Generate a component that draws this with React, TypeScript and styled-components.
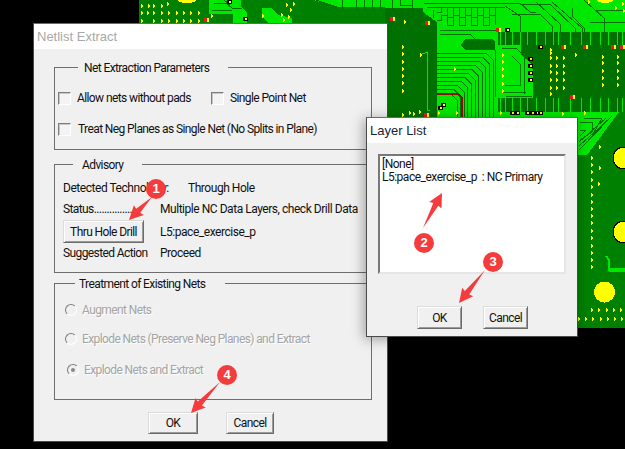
import React from "react";
import styled, { createGlobalStyle } from "styled-components";

const Global = createGlobalStyle`
  html, body {
    margin: 0;
    padding: 0;
    background: #000;
  }
  * {
    box-sizing: border-box;
  }
`;

const Desktop = styled.div`
  position: relative;
  width: 625px;
  height: 449px;
  overflow: hidden;
  background: #000;
  font-family: Roboto, "Liberation Sans", Arial, sans-serif;
  font-size: 12px;
  letter-spacing: -0.6px;
  color: #111;
`;

const Board = styled.svg`
  position: absolute;
  left: 139px;
  top: 0;
`;

const Overlay = styled.svg`
  position: absolute;
  left: 0;
  top: 0;
  pointer-events: none;
`;

const Window = styled.div<{ $x: number; $y: number; $w: number; $h: number; $shadow?: boolean }>`
  position: absolute;
  left: ${p => p.$x}px;
  top: ${p => p.$y}px;
  width: ${p => p.$w}px;
  height: ${p => p.$h}px;
  background: #f0f0f0;
  border: 1px solid #4a4a4a;
  border-top-color: #6a6a6a;
  box-shadow: ${p => (p.$shadow ? "-2px 2px 12px rgba(0, 0, 0, 0.35)" : "none")};
`;

const TitleBar = styled.div<{ $active?: boolean }>`
  height: 25px;
  background: #fff;
  padding-left: 3px;
  line-height: 25px;
  font-family: "Liberation Sans", Arial, sans-serif;
  font-size: 13px;
  letter-spacing: 0;
  color: ${p => (p.$active ? "#14253a" : "#a8a8a8")};
`;

const MainBody = styled.div`
  padding: 18px 0 0 20px;
`;

const Group = styled.div<{ $h: number; $top?: number }>`
  position: relative;
  width: 318px;
  height: ${p => p.$h}px;
  margin-top: ${p => p.$top || 0}px;
  border: 1px solid #6e6e6e;
`;

const Legend = styled.span<{ $x: number; $w: number; $pad: number }>`
  position: absolute;
  left: ${p => p.$x}px;
  top: -7px;
  width: ${p => p.$w}px;
  height: 14px;
  padding-left: ${p => p.$pad}px;
  line-height: 14px;
  background: #f0f0f0;
  white-space: nowrap;
`;

const GroupContent = styled.div<{ $top: number; $left: number }>`
  display: flex;
  flex-direction: column;
  padding: ${p => p.$top}px 0 0 ${p => p.$left}px;
`;

const Row = styled.div<{ $top?: number; $h?: number }>`
  display: flex;
  align-items: center;
  height: ${p => p.$h || 14}px;
  margin-top: ${p => p.$top || 0}px;
  white-space: nowrap;
`;

const Check = styled.label<{ $w?: number; $gap?: number }>`
  display: flex;
  align-items: center;
  gap: ${p => p.$gap || 6}px;
  width: ${p => (p.$w ? `${p.$w}px` : "auto")};
`;

const CheckBox = styled.span`
  display: block;
  width: 13px;
  height: 13px;
  background: #f4f4f4;
  border: 1px solid;
  border-color: #7c7c7c #fff #fff #7c7c7c;
  box-shadow: inset 1px 1px 0 #c8c8c8;
`;

const RowLabel = styled.span<{ $w: number }>`
  display: block;
  width: ${p => p.$w}px;
  flex: none;
`;

const RowValue = styled.span`
  letter-spacing: -0.46px;
`;

const Radio = styled.label<{ $indent?: number }>`
  display: flex;
  align-items: center;
  gap: 5px;
  margin-left: ${p => p.$indent || 0}px;
  color: #a4a4a4;
  text-shadow: 1px 1px 0 #fff;
`;

const RadioDot = styled.span<{ $on?: boolean }>`
  display: flex;
  align-items: center;
  justify-content: center;
  width: 12px;
  height: 12px;
  border-radius: 50%;
  border: 1px solid;
  border-color: #7c7c7c #fff #fff #7c7c7c;
  &::after {
    content: "";
    width: 4px;
    height: 4px;
    border-radius: 50%;
    background: ${p => (p.$on ? "#8a8a8a" : "transparent")};
  }
`;

const Button = styled.button<{ $w: number; $h?: number }>`
  width: ${p => p.$w}px;
  height: ${p => p.$h || 22}px;
  padding: 0;
  background: #f0f0f0;
  border: 1px solid;
  border-color: #dcdcdc #6c6c6c #6c6c6c #dcdcdc;
  box-shadow: inset 1px 1px 0 #fff, inset -1px -1px 0 #9a9a9a;
  font: inherit;
  letter-spacing: inherit;
  color: #111;
`;

const Footer = styled.div<{ $top: number; $left: number; $gap: number }>`
  display: flex;
  gap: ${p => p.$gap}px;
  margin: ${p => p.$top}px 0 0 ${p => p.$left}px;
`;

const ListBody = styled.div`
  padding: 11px 0 0 11px;
`;

const ListBox = styled.div`
  width: 188px;
  height: 120px;
  padding: 2px 0 0 2px;
  background: #fff;
  border: 2px solid;
  border-color: #787878 #e6e6e6 #e6e6e6 #787878;
  line-height: 13px;
  white-space: pre;
  letter-spacing: -0.5px;
`;

const Badge = styled.span<{ $x: number; $y: number }>`
  position: absolute;
  left: ${p => p.$x - 10}px;
  top: ${p => p.$y - 10}px;
  width: 20px;
  height: 20px;
  border-radius: 50%;
  background: #f53c3c;
  color: #fff;
  font-family: "Liberation Sans", Arial, sans-serif;
  font-size: 13px;
  font-weight: bold;
  letter-spacing: 0;
  line-height: 20px;
  text-align: center;
`;

const BASE = "#008000";
const DARK = "#007000";
const LIME = "#00e800";

// arrow from a thin tail to a wide head
const arrowPoints = (x1: number, y1: number, x2: number, y2: number) => {
  const len = Math.hypot(x2 - x1, y2 - y1);
  const ux = (x2 - x1) / len;
  const uy = (y2 - y1) / len;
  const nx = -uy;
  const ny = ux;
  const bx = x2 - ux * 13;
  const by = y2 - uy * 13;
  const pt = (x: number, y: number) => `${x.toFixed(1)},${y.toFixed(1)}`;
  return [
    pt(x1, y1),
    pt(bx + nx * 2.8, by + ny * 2.8),
    pt(bx + nx * 7 - ux, by + ny * 7 - uy),
    pt(x2, y2),
    pt(bx - nx * 7 - ux, by - ny * 7 - uy),
    pt(bx - nx * 2.8, by - ny * 2.8)
  ].join(" ");
};

const arrows = [
  [152, 197, 129, 220],
  [423, 228, 442, 193],
  [485, 270, 459, 303],
  [220, 382, 191, 413]
];

const badges = [
  { n: 1, x: 156, y: 189 },
  { n: 2, x: 424, y: 243 },
  { n: 3, x: 493, y: 262 },
  { n: 4, x: 227, y: 375 }
];

const brightZones = [
  "209,0 241,0 241,7 247,12 247,23 233,23 233,14 209,14",
  "262,8 272,8 278,15 292,18 292,23 268,23 262,16",
  "313,0 385,0 385,7 337,7",
  "385,0 625,0 625,32 498,32 498,98 533,98 533,70 530,62 521,55 521,45 498,45 498,117 437,117 437,22 423,12 423,8 385,8",
  "498,112 578,112 578,117 498,117",
  "578,112 619,112 587,155 578,155"
];

const darkZones = [
  "385,8 423,8 423,12 437,22 437,117 385,117",
  "465,39 493,39 495,42 495,50 465,50 461,45",
  "498,32 625,32 625,45 498,45",
  "533,45 625,45 625,98 533,98 533,70 530,62 521,55 521,45",
  "498,98 625,98 625,112 498,112"
];

const concentric = Array.from({ length: 11 }, (_, i) => {
  const y = 53 + i * 4;
  const x = 493 - i * 3.6;
  return `M437 ${y}H${x - 7}L${x} ${y + 7}V117`;
});

const meanders = [12, 20].map(y => {
  let d = `M437 ${y}`;
  for (let x = 441; x < 498; x += 6) {
    d += `H${x}V${y + (x % 12 === 3 ? 5 : -5)}`;
  }
  return d;
});

const traces = [
  ...concentric,
  ...meanders,
  "M412 0V8",
  "M392 0V8",
  "M400 0V5H412",
  "M424 3H520L530 12H536",
  "M427 7H505",
  "M433 10V18",
  "M440 30H496",
  "M440 34H470L478 42",
  "M498 38H530",
  "M495 50V97",
  "M502 48H516L524 56V94",
  "M503 92H526",
  "M505 85H520V64L512 56",
  "M506 96H532",
  "M505 6L520 16V32",
  "M512 14H540L552 26V32",
  "M520 4H550L575 28V32",
  "M536 2L560 24V32",
  "M552 2L582 28V32",
  "M572 8V16L584 28V32",
  "M584 0L604 18",
  "M596 10H625",
  "M590 22H625",
  "M604 18V32",
  "M316 0L340 8",
  "M342 0V7",
  "M356 0V7",
  "M364 0V7",
  "M372 0V7",
  "M380 0V7",
  "M214 3H226L232 8H242",
  "M224 0L230 5",
  "M212 10H232",
  "M584 118H602L592 136",
  "M580 122H592V132L580 140",
  "M580 130H586L580 136",
  "M579 146L610 118",
  "M579 150L612 116",
  "M579 142L606 118"
];

const verticals = [
  500, 505, 512, 520, 527, 536, 545, 553, 558, 570, 581, 590, 600, 608, 617, 622
];

const dots: number[][] = [
  ...[141, 148, 153, 161].map(x => [x, 6]),
  [167, 4],
  ...[141, 147, 153, 161, 168, 176, 183, 190, 198].map(x => [x, 13]),
  ...[141, 153, 161, 168, 176, 183, 190, 198].map(x => [x, 21]),
  [211, 16], [262, 16], [288, 17], [286, 5], [293, 4], [290, 10], [281, 15], [283, 20],
  [404, 22], [454, 69], [420, 55],
  ...[47, 54, 62, 69, 76, 83, 91, 115].map(y => [402, y]),
  ...[55, 62, 69, 76, 84, 91].map(y => [502, y]),
  [550, 50], [550, 53],
  ...[58, 66, 72, 80, 88, 94].map(y => [550, y]),
  ...[58, 66, 73, 80, 88].map(y => [556, y]),
  ...[58, 66, 73, 80, 88].map(y => [563, y]),
  [575, 55],
  ...[57, 63, 71, 78, 85].flatMap(y => [[602, y], [617, y]]),
  [588, 2], [615, 8], [622, 4], [623, 11],
  [500, 113], [562, 114], [584, 113], [409, 113], [413, 114], [419, 112], [438, 113], [456, 113],
  [599, 147],
  ...[158, 165, 172, 180, 187, 195, 202, 209, 216, 223, 231, 238, 246, 253, 260, 267].map(y => [591, y]),
  [599, 168], [598, 184],
  ...[591, 598, 606, 613, 620].map(x => [x, 310]),
  ...[578, 585, 592, 600, 607, 614, 621].map(x => [x, 319])
];

const pads = [
  [229, 2], [245, 19], [540, 47], [530, 59], [530, 66], [530, 73], [530, 80], [507, 30],
  [512, 113], [517, 113], [527, 113], [532, 113], [537, 113], [540, 113], [443, 105], [440, 108]
];

const redPads = [
  [563, 47], [585, 47], [613, 47], [622, 47], [572, 97], [498, 30], [392, 19], [427, 23], [426, 115], [206, 20]
];

function PcbView() {
  return (
    <Board width={486} height={328} viewBox="139 0 486 328" shapeRendering="crispEdges">
      <rect x={139} y={0} width={486} height={328} fill={BASE} />
      {brightZones.map(p => (
        <polygon key={p} points={p} fill={LIME} />
      ))}
      {darkZones.map(p => (
        <polygon key={p} points={p} fill={DARK} />
      ))}
      {traces.map(d => (
        <path key={d} d={d} fill="none" stroke={DARK} strokeWidth={1} />
      ))}
      {verticals.map(x => (
        <g key={x} fill={LIME}>
          <rect x={x} y={32} width={1} height={13} />
          <rect x={x} y={98} width={1} height={14} />
        </g>
      ))}
      <path d="M427 52V110H430M420 55L427 52" fill="none" stroke={LIME} strokeWidth={1} />
      <path d="M606 256L609 260V270H625" fill="none" stroke={LIME} strokeWidth={2} />
      <rect x={609} y={268} width={16} height={4} fill={LIME} />
      <path d="M437 94H458L462 98V117" fill="none" stroke="#8a0f0f" strokeWidth={2} />
      <ellipse cx={187} cy={0} rx={9} ry={3} fill="#ffff00" />
      <ellipse cx={605} cy={0} rx={8} ry={3} fill="#ffff00" />
      <circle cx={624} cy={158} r={11} fill="#ffff00" stroke="#000" />
      <circle cx={624} cy={232} r={11} fill="#ffff00" stroke="#000" />
      <circle cx={604.5} cy={292} r={10.5} fill="#ffff00" />
      {redPads.map(([x, y]) => (
        <g key={`${x}-${y}`}>
          <rect x={x - 2} y={y - 2} width={3} height={4} fill="#e02020" />
          <rect x={x + 1} y={y - 2} width={2} height={4} fill="#ffff00" />
        </g>
      ))}
      {pads.map(([x, y]) => (
        <g key={`${x}-${y}`}>
          <rect x={x - 2} y={y - 2} width={5} height={4} fill="#000" />
          <rect x={x} y={y - 1} width={2} height={2} fill="#ffff00" />
        </g>
      ))}
      {dots.map(([x, y], i) => (
        <polygon key={i} points={`${x},${y - 2} ${x + 3},${y} ${x},${y + 2}`} fill="#ffff00" />
      ))}
    </Board>
  );
}

export default function App() {
  return (
    <Desktop>
      <Global />
      <PcbView />

      <Window $x={33} $y={23} $w={355} $h={419}>
        <TitleBar>Netlist Extract</TitleBar>
        <MainBody>
          <Group $h={83}>
            <Legend $x={23} $w={150} $pad={6}>Net Extraction Parameters</Legend>
            <GroupContent $top={23} $left={3}>
              <Row>
                <Check $w={153}>
                  <CheckBox />
                  Allow nets without pads
                </Check>
                <Check>
                  <CheckBox />
                  Single Point Net
                </Check>
              </Row>
              <Row $top={17}>
                <Check $gap={7}>
                  <CheckBox />
                  Treat Neg Planes as Single Net (No Splits in Plane)
                </Check>
              </Row>
            </GroupContent>
          </Group>

          <Group $h={109} $top={14}>
            <Legend $x={18} $w={69} $pad={9}>Advisory</Legend>
            <GroupContent $top={16} $left={8}>
              <Row>
                <RowLabel $w={125}>
                  <RowValue>Detected Technology:</RowValue>
                </RowLabel>
                <RowValue>Through Hole</RowValue>
              </Row>
              <Row $top={7}>
                <RowLabel $w={97}>Status.................</RowLabel>
                <RowValue>Multiple NC Data Layers, check Drill Data</RowValue>
              </Row>
              <Row $top={4} $h={23}>
                <RowLabel $w={97}>
                  <Button $w={81} $h={23}>Thru Hole Drill</Button>
                </RowLabel>
                <RowValue>L5:pace_exercise_p</RowValue>
              </Row>
              <Row $top={3}>
                <RowLabel $w={97}>Suggested Action</RowLabel>
                <RowValue>Proceed</RowValue>
              </Row>
            </GroupContent>
          </Group>

          <Group $h={117} $top={10}>
            <Legend $x={20} $w={150} $pad={4}>Treatment of Existing Nets</Legend>
            <GroupContent $top={19} $left={10}>
              <Row>
                <Radio>
                  <RadioDot />
                  Augment Nets
                </Radio>
              </Row>
              <Row $top={15}>
                <Radio>
                  <RadioDot />
                  Explode Nets (Preserve Neg Planes) and Extract
                </Radio>
              </Row>
              <Row $top={17}>
                <Radio $indent={2}>
                  <RadioDot $on />
                  Explode Nets and Extract
                </Radio>
              </Row>
            </GroupContent>
          </Group>

          <Footer $top={12} $left={94} $gap={28}>
            <Button $w={50}>OK</Button>
            <Button $w={48}>Cancel</Button>
          </Footer>
        </MainBody>
      </Window>

      <Window $x={366} $y={117} $w={212} $h={220} $shadow>
        <TitleBar $active>Layer List</TitleBar>
        <ListBody>
          <ListBox>
            {"[None]\nL5:pace_exercise_p  : NC Primary"}
          </ListBox>
          <Footer $top={32} $left={39} $gap={21}>
            <Button $w={45} $h={23}>OK</Button>
            <Button $w={45} $h={23}>Cancel</Button>
          </Footer>
        </ListBody>
      </Window>

      <Overlay width={625} height={449}>
        {arrows.map(([x1, y1, x2, y2]) => (
          <polygon key={x1} points={arrowPoints(x1, y1, x2, y2)} fill="#f53c3c" />
        ))}
      </Overlay>
      {badges.map(b => (
        <Badge key={b.n} $x={b.x} $y={b.y}>{b.n}</Badge>
      ))}
    </Desktop>
  );
}
